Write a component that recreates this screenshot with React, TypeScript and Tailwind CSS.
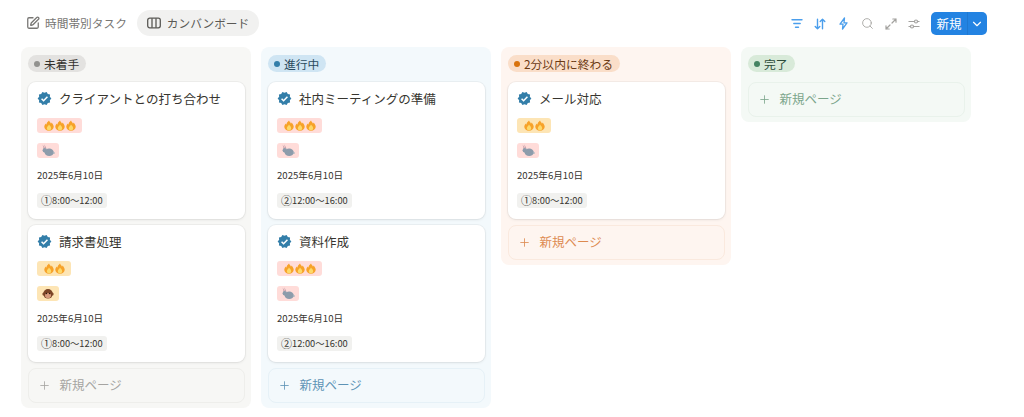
import React from "react";
import { ChevronDown, Plus, Search, SquarePen } from "lucide-react";

const font = { fontFamily: '"Noto Sans CJK JP", "Noto Sans", sans-serif' };

function Flame() {
  return (
    <svg width="10" height="11" viewBox="0 0 10 11" className="shrink-0">
      <path d="M5 .5c.6 1.600 1.600 1.800 2 3.200.4-.5.5-1 .5-1.300C8.900 3.800 9.700 5.300 9.700 6.800 9.700 9.200 7.700 10.700 5 10.700S.3 9.200.3 6.800c0-1.500.8-2.400 1.300-3.400.2.600.4 1 .8 1.200C2.500 3 3.800 1.600 5 .5z" fill="#f7a229" />
      <path d="M5 4.500c.4 1.200 2.200 1.900 2.200 3.700 0 1.300-1 2.100-2.200 2.100s-2.200-.8-2.200-2.100C2.800 6.700 4.500 6 5 4.500z" fill="#fdd96a" />
    </svg>
  );
}

function Rabbit() {
  return (
    <svg width="14" height="13" viewBox="0 0 14 13">
      <path d="M3.400 0.200L5.200 4 3.900 4.400zM1.600 0.600L3.900 4.200 2.700 5z" fill="#c7a0ab" />
      <ellipse cx="8.200" cy="8.300" rx="4.600" ry="3.700" fill="#8d9cab" />
      <circle cx="3.800" cy="6.300" r="2.200" fill="#8d9cab" />
      <circle cx="12.800" cy="9" r="1" fill="#aab4be" />
    </svg>
  );
}

function Monkey() {
  return (
    <svg width="12" height="12" viewBox="0 0 12 12">
      <circle cx="1.800" cy="6" r="1.500" fill="#8a5230" />
      <circle cx="10.200" cy="6" r="1.500" fill="#8a5230" />
      <circle cx="6" cy="5.800" r="4.800" fill="#7a4426" />
      <ellipse cx="6" cy="7.500" rx="3" ry="2.600" fill="#d69a7c" />
      <circle cx="4.500" cy="5.500" r=".7" fill="#2b1a10" />
      <circle cx="7.500" cy="5.500" r=".7" fill="#2b1a10" />
    </svg>
  );
}

function Verified() {
  return (
    <svg width="15" height="15" viewBox="0 0 24 24" className="shrink-0">
      <path d="M23 12l-2.440-2.790.34-3.690-3.610-.82-1.890-3.200L12 2.960 8.600 1.500 6.710 4.690 3.100 5.500l.34 3.700L1 12l2.440 2.790-.34 3.700 3.610.82L8.600 22.500l3.400-1.470 3.400 1.460 1.890-3.190 3.610-.82-.34-3.690L23 12z" fill="#337ea9" />
      <path d="M7.300 12.300l3.200 3.200 6.200-6.300" fill="none" stroke="#fff" strokeWidth="2.400" />
    </svg>
  );
}

function BoardIcon() {
  return (
    <svg width="14" height="12" viewBox="0 0 14 12" fill="none" stroke="#5a5955" strokeWidth="1.300">
      <rect x=".7" y="1.200" width="12.600" height="9.600" rx="2" />
      <path d="M5 1.200v9.600M9 1.200v9.600" />
    </svg>
  );
}

function FilterIcon() {
  return (
    <svg width="12" height="11" viewBox="0 0 12 11" fill="none" stroke="#4a9eec" strokeWidth="1.400" strokeLinecap="round">
      <path d="M1 1.700h10M2.800 5.500h6.400M4.500 9.300h3" />
    </svg>
  );
}

function SortIcon() {
  return (
    <svg width="12" height="12" viewBox="0 0 12 12" fill="none" stroke="#4a9eec" strokeWidth="1.400" strokeLinecap="round" strokeLinejoin="round">
      <path d="M3.500 1.200v9.600M1.200 8.500l2.300 2.300 2.300-2.300M8.500 10.800V1.200M6.200 3.500l2.300-2.300 2.300 2.300" />
    </svg>
  );
}

function BoltIcon() {
  return (
    <svg width="9" height="13" viewBox="0 0 9 13" fill="none" stroke="#4a9eec" strokeWidth="1.300" strokeLinejoin="round">
      <path d="M5.500 1L1 7.200h3L3.500 12 8 5.800H5z" />
    </svg>
  );
}

function ExpandIcon() {
  return (
    <svg width="12" height="12" viewBox="0 0 12 12" fill="none" stroke="#a3a29f" strokeWidth="1.200" strokeLinecap="round" strokeLinejoin="round">
      <path d="M7 5L11 1M7.800 1H11v3.200M5 7L1 11M1 7.800V11h3.200" />
    </svg>
  );
}

function SliderIcon() {
  return (
    <svg width="12" height="10" viewBox="0 0 12 10" fill="none" stroke="#a3a29f" strokeWidth="1.200">
      <path d="M.5 2.500h11M.5 7.500h11" />
      <circle cx="8" cy="2.500" r="1.500" fill="#fff" />
      <circle cx="4" cy="7.500" r="1.500" fill="#fff" />
    </svg>
  );
}

type CardData = {
  title: string;
  flames: number;
  animal: "rabbit" | "monkey";
  mark: string;
  time: string;
};

function Card({ card }: { card: CardData }) {
  const three = card.flames === 3;
  return (
    <div className="h-[137px] rounded-[8px] bg-white pl-[9.500px] pt-[8px] shadow-[0_0_0_1px_rgba(15,15,15,0.04),0_1px_3px_rgba(15,15,15,0.08)]">
      <div className="flex h-[17px] items-center gap-[7px]">
        <Verified />
        <span className="text-[12.500px] leading-[17px] text-[#37352f]">{card.title}</span>
      </div>
      <div className="mt-[11px] flex flex-col items-start">
        <div className={`flex h-[15px] items-center gap-[1px] rounded-[3px] px-[6.500px] ${three ? "bg-[#ffdcd9]" : "bg-[#fde5b5]"}`}>
          {Array.from({ length: card.flames }).map((_, i) => (
            <Flame key={i} />
          ))}
        </div>
        <div className={`mt-[10px] flex h-[15px] w-[22px] items-center justify-center rounded-[3px] ${card.animal === "rabbit" ? "bg-[#ffdcd9]" : "bg-[#fde5b5]"}`}>
          {card.animal === "rabbit" ? <Rabbit /> : <Monkey />}
        </div>
        <div className="mt-[9px] text-[9.600px] leading-[16px] text-[#37352f]">2025年6月10日</div>
        <div className="mt-[10px] flex h-[15px] items-center rounded-[3px] bg-[#f1f1ef] px-[4px] text-[9.300px] text-[#37352f]">
          <span className="text-[11px] leading-[15px]">{card.mark}</span>
          {card.time}
        </div>
      </div>
    </div>
  );
}

function NewPage({ color, bg, border, icon }: { color: string; bg: string; border: string; icon: string }) {
  return (
    <div className={`flex h-[35px] items-center gap-[9px] rounded-[8px] border pl-[9px] text-[12.500px] ${color} ${bg} ${border}`}>
      <Plus size={13} strokeWidth={1.500} className={icon} />
      <span>新規ページ</span>
    </div>
  );
}

const a: CardData[] = [
  { title: "クライアントとの打ち合わせ", flames: 3, animal: "rabbit", mark: "①", time: "8:00〜12:00" },
  { title: "請求書処理", flames: 2, animal: "monkey", mark: "①", time: "8:00〜12:00" },
];
const b: CardData[] = [
  { title: "社内ミーティングの準備", flames: 3, animal: "rabbit", mark: "②", time: "12:00〜16:00" },
  { title: "資料作成", flames: 3, animal: "rabbit", mark: "②", time: "12:00〜16:00" },
];
const c: CardData[] = [{ title: "メール対応", flames: 2, animal: "rabbit", mark: "①", time: "8:00〜12:00" }];

function Column({
  label,
  dot,
  pill,
  text,
  bg,
  cards,
  children,
}: {
  label: string;
  dot: string;
  pill: string;
  text: string;
  bg: string;
  cards: CardData[];
  children: React.ReactNode;
}) {
  return (
    <div className={`w-[230px] self-start rounded-[8px] px-[6.500px] pb-[5px] pt-[8px] ${bg}`}>
      <div className={`ml-[0.500px] flex h-[17px] w-fit items-center gap-[4px] rounded-full pl-[6px] pr-[7px] text-[11.800px] leading-[17px] ${pill} ${text}`}>
        <span className={`h-[6px] w-[6px] rounded-full ${dot}`} />
        {label}
      </div>
      <div className="mt-[10px] flex flex-col gap-[6px]">
        {cards.map((card) => (
          <Card key={card.title} card={card} />
        ))}
        {children}
      </div>
    </div>
  );
}

export default function App() {
  return (
    <div className="h-[417px] w-[1024px] overflow-hidden bg-white" style={font}>
      <div className="flex h-[47px] items-start justify-between pl-[26px] pr-[37px] pt-[10px]">
        <div className="flex h-[26px] items-center">
          <SquarePen size={14} strokeWidth={2.200} className="text-[#787774]" />
          <span className="ml-[5px] text-[11.700px] text-[#787774]">時間帯別タスク</span>
          <div className="ml-[10px] flex h-[26px] items-center gap-[6px] rounded-full bg-[#f1f1f0] pl-[10px] pr-[10px]">
            <BoardIcon />
            <span className="text-[11.700px] text-[#5a5955]">カンバンボード</span>
          </div>
        </div>
        <div className="mt-[2px] flex h-[23px] items-center">
          <div className="flex w-[23.500px] justify-center"><FilterIcon /></div>
          <div className="flex w-[23.500px] justify-center"><SortIcon /></div>
          <div className="flex w-[23.500px] justify-center"><BoltIcon /></div>
          <div className="flex w-[23.500px] justify-center"><Search size={13} strokeWidth={1.600} className="text-[#a3a29f]" /></div>
          <div className="flex w-[23.500px] justify-center"><ExpandIcon /></div>
          <div className="flex w-[23.500px] justify-center"><SliderIcon /></div>
          <div className="ml-[5px] flex h-[23px] w-[56px] items-center rounded-[5px] bg-[#2383e2] text-white">
            <span className="w-[37px] border-r border-[#1f78d1] text-center text-[12.500px] leading-[23px]">新規</span>
            <ChevronDown size={14} strokeWidth={2} className="ml-[2px]" />
          </div>
        </div>
      </div>
      <div className="flex gap-[10px] pl-[21px]">
        <Column label="未着手" dot="bg-[#91918e]" pill="bg-[#e3e2e0]" text="text-[#32302c]" bg="bg-[#f7f7f5]" cards={a}>
          <NewPage color="text-[#a5a4a1]" bg="bg-[#f7f7f5]" border="border-[#eeeeeb]" icon="text-[#a5a4a1]" />
        </Column>
        <Column label="進行中" dot="bg-[#337ea9]" pill="bg-[#cfe5f3]" text="text-[#2a4a5e]" bg="bg-[#f3f9fc]" cards={b}>
          <NewPage color="text-[#5d93b5]" bg="bg-[#f3f9fc]" border="border-[#e6f1f7]" icon="text-[#5d93b5]" />
        </Column>
        <Column label="2分以内に終わる" dot="bg-[#d9730d]" pill="bg-[#fadec9]" text="text-[#6b3a14]" bg="bg-[#fef5f0]" cards={c}>
          <NewPage color="text-[#dd8a50]" bg="bg-[#fef5f0]" border="border-[#fae9de]" icon="text-[#dd8a50]" />
        </Column>
        <Column label="完了" dot="bg-[#448361]" pill="bg-[#d8ead9]" text="text-[#2b4a38]" bg="bg-[#f4f9f5]" cards={[]}>
          <NewPage color="text-[#7ba58b]" bg="bg-[#f4f9f5]" border="border-[#e9f2eb]" icon="text-[#7ba58b]" />
        </Column>
      </div>
    </div>
  );
}
